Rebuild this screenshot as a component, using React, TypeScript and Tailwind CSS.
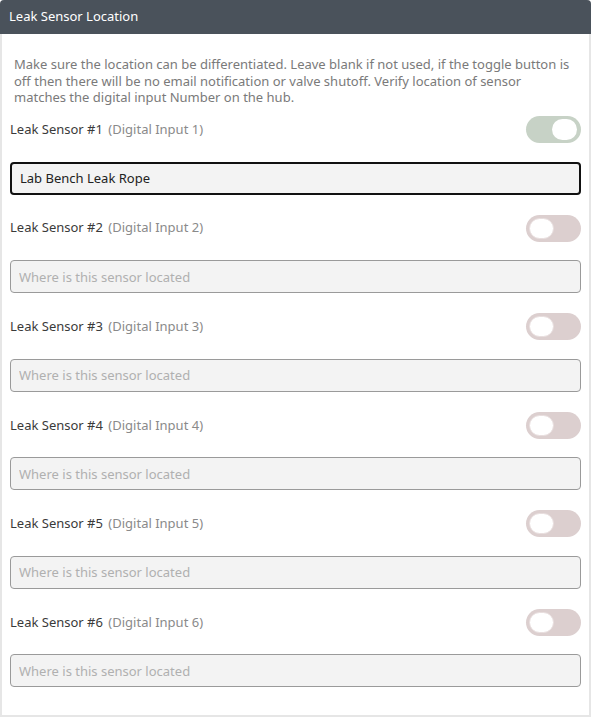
import React, { useState } from "react";

const sensors = [1, 2, 3, 4, 5, 6];

function Toggle({ on }: { on: boolean }) {
  return (
    <div
      className={
        "relative h-[27px] w-[55px] rounded-full " +
        (on ? "bg-[#c7d2c6]" : "bg-[#dccfcf]")
      }
    >
      <div
        className={
          "absolute top-[3px] h-[21px] w-[25px] rounded-full bg-white " +
          (on ? "right-[4px]" : "left-[3px] border border-[#e8dede]")
        }
      />
    </div>
  );
}

export default function App() {
  const [values] = useState<string[]>(["Lab Bench Leak Rope", "", "", "", "", ""]);
  return (
    <div
      className="h-[718px] w-[592px] overflow-hidden bg-white"
      style={{ fontFamily: '"Noto Sans", "Open Sans", sans-serif' }}
    >
      <div className="h-[717px] w-[591px] rounded-t-[4px] border-x-2 border-b-2 border-[#e6e6e6]">
        <div className="-mx-[2px] flex h-[34px] items-center rounded-t-[4px] bg-[#4a525b] px-[9px] text-[13px] text-white">
          Leak Sensor Location
        </div>
        <div className="px-[8px] pt-[22px]">
          <p className="pl-[4px] pr-[7px] text-[13px] leading-[16.5px] text-[#7a7a7a]">
            Make sure the location can be differentiated. Leave blank if not used, if the toggle button is off then there will be no email notification or valve shutoff. Verify location of sensor matches the digital input Number on the hub.
          </p>
          <div className="mt-[4px] flex flex-col">
            {sensors.map((n, i) => (
              <div key={n} className="flex flex-col">
                <div className="flex h-[40px] items-center justify-between">
                  <div className="text-[13px] text-[#3a3a3a]">
                    Leak Sensor #{n}{" "}
                    <span className="ml-[2px] text-[#8a8a8a]">(Digital Input {n})</span>
                  </div>
                  <Toggle on={i === 0} />
                </div>
                <div className="mt-[12px] mb-[13.6px]">
                  <input
                    readOnly
                    value={values[i]}
                    placeholder="Where is this sensor located"
                    className={
                      "h-[33px] w-full rounded-[4px] bg-[#f3f3f3] px-[8px] text-[13px] text-[#222] placeholder:text-[#b0b0b0] outline-none " +
                      (i === 0 ? "border-2 border-[#111]" : "border border-[#9a9a9a]")
                    }
                  />
                </div>
              </div>
            ))}
          </div>
        </div>
      </div>
    </div>
  );
}
